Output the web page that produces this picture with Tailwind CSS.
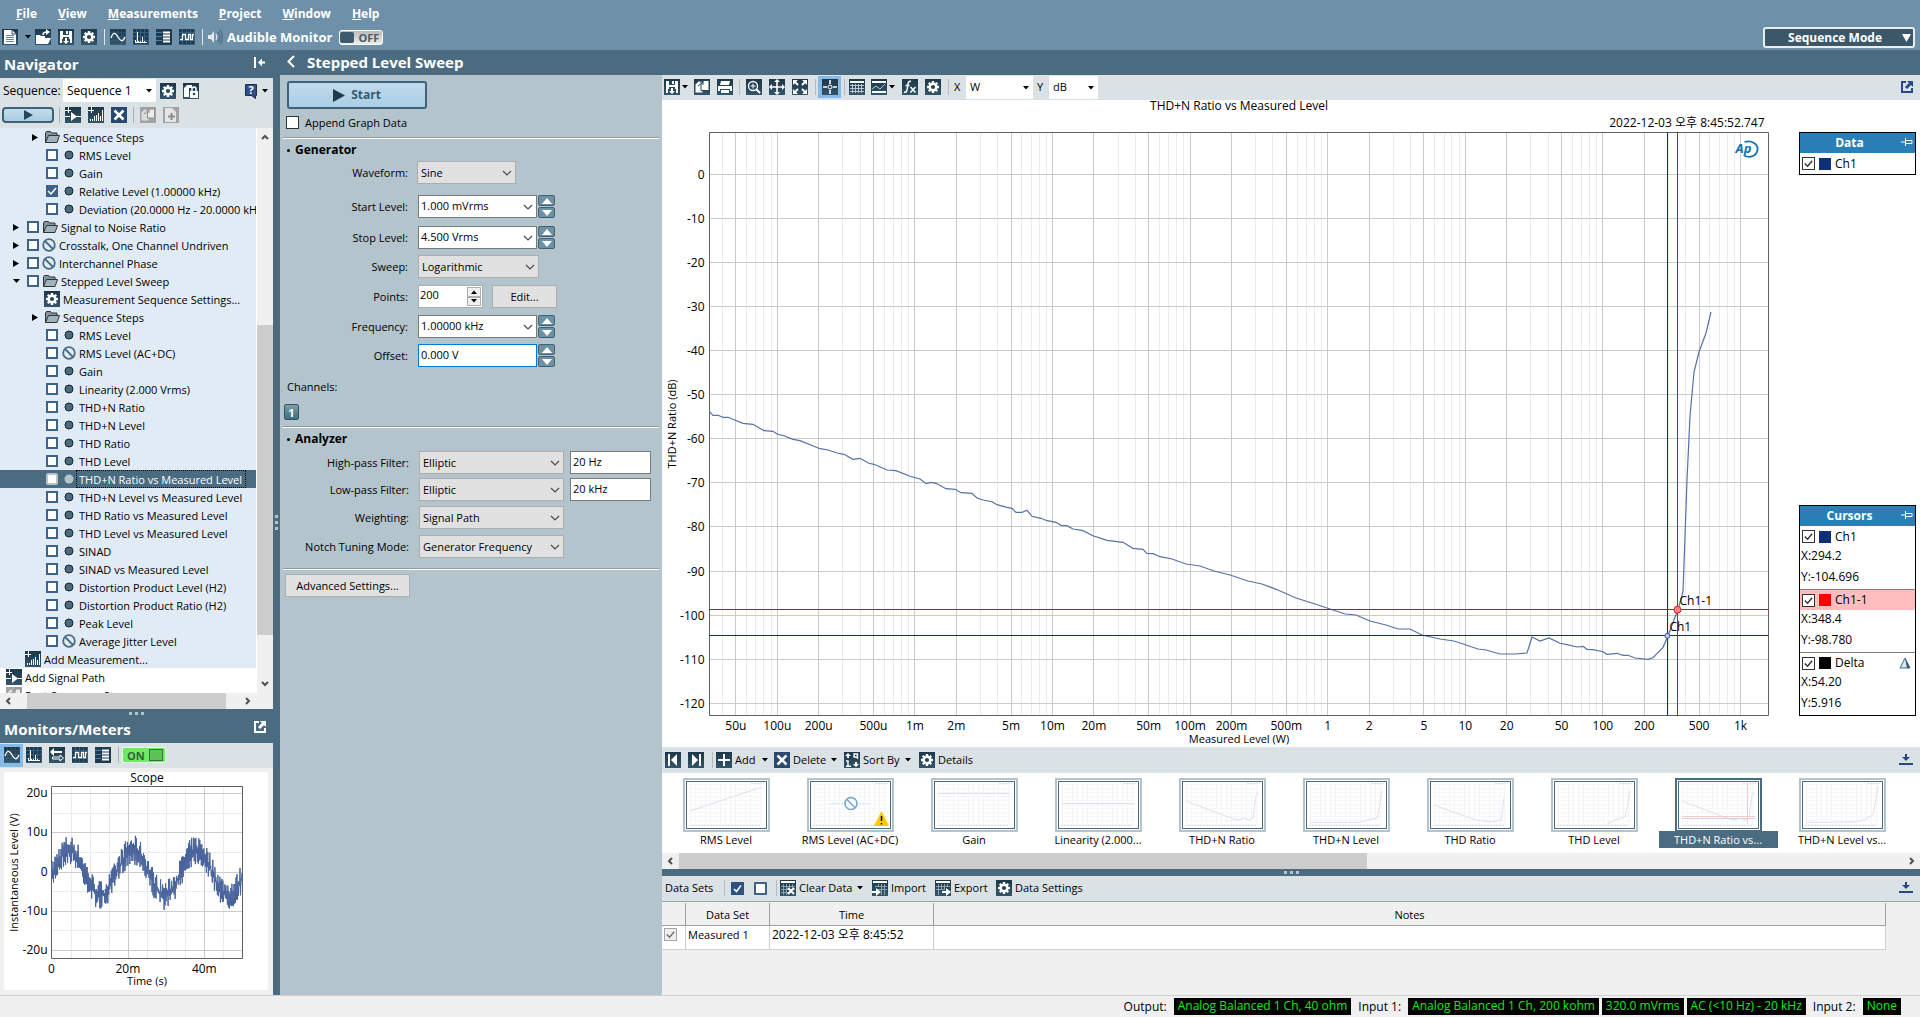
<!DOCTYPE html>
<html lang="en">
<head>
<meta charset="utf-8">
<title>Stepped Level Sweep</title>
<script src="https://cdn.jsdelivr.net/npm/@tailwindcss/browser@4"></script>
</head>
<body class="bg-[#f0f0f0] text-black text-[11px] leading-4 font-['Open_Sans','Noto_Sans_CJK_KR',sans-serif]">
<svg class="absolute size-0" aria-hidden="true">
  <defs>
    <linearGradient id="tile" x1="0" y1="0" x2="0" y2="1"><stop offset="0" stop-color="#1d3748"/><stop offset="1" stop-color="#33556a"/></linearGradient>
    <pattern id="tinygrid" width="4" height="4" patternUnits="userSpaceOnUse"><path d="M0 3.500H4M3.500 0V4" stroke="#3f6c94" stroke-width="1"/></pattern>
  </defs>
  <symbol id="doc" viewBox="0 0 16 16"><rect width="16" height="16" fill="url(#tile)"/><path d="M2 1h8l4 4v10H2z" fill="#fff"/><path d="M10 1v4h4" fill="none" stroke="#2b4a5e"/><path d="M4 6.500h8M4 8.500h8M4 10.500h8M4 12.500h8" stroke="#6b8494"/></symbol>
  <symbol id="open" viewBox="0 0 16 16"><rect width="16" height="16" fill="url(#tile)"/><path d="M1 6h4l1 1h4v3H4l-2 5H1z" fill="#fff"/><path d="M4 9h12l-3 6H1.500z" fill="#fff"/><path d="M8 6c0-3 2-3 4-3" fill="none" stroke="#fff" stroke-width="1.500"/><path d="M11 0l4 3-4 3z" fill="#fff"/></symbol>
  <symbol id="save" viewBox="0 0 16 16"><rect width="16" height="16" fill="url(#tile)"/><path d="M2 2h12v12h-2v-4h-1v-2H5v2H4v4H2z" fill="#fff"/><path d="M5 2h6v4H5z" fill="#26465a"/><path d="M8 2h2v3H8z" fill="#fff"/><path d="M7 9h2v3h2l-3 3-3-3h2z" fill="#fff"/></symbol>
  <symbol id="gear" viewBox="0 0 16 16"><rect width="16" height="16" fill="url(#tile)"/><g fill="#fff"><circle cx="8" cy="8" r="4.500"/><path d="M6.800 2h2.400v12H6.800zM2 6.800h12v2.400H2z"/><path d="M6.800 2h2.400v12H6.800zM2 6.800h12v2.400H2z" transform="rotate(45 8 8)"/></g><circle cx="8" cy="8" r="2.100" fill="#26465a"/></symbol>
  <symbol id="sine" viewBox="0 0 16 16"><rect width="16" height="16" fill="url(#tile)"/><rect width="16" height="16" fill="url(#tinygrid)" opacity=".4"/><path d="M1 9C3 3 5 3 8 8s5 5 7 0" fill="none" stroke="#fff" stroke-width="1.300"/></symbol>
  <symbol id="fft" viewBox="0 0 16 16"><rect width="16" height="16" fill="#1f3b50"/><rect width="16" height="16" fill="url(#tinygrid)" opacity=".7"/><path d="M2.500 13V11M4.500 14V3M5.500 12v2M7.500 14v-2M9.500 14V8M11.500 14v-2M12.500 13v1" stroke="#fff" fill="none"/><path d="M2 13.500h12" stroke="#fff"/></symbol>
  <symbol id="list" viewBox="0 0 16 16"><rect width="16" height="16" fill="#1f3b50"/><path d="M0 3.500h6M0 7.500h6M0 11.500h6" stroke="#4c7cab"/><path d="M7 3.500h7M7 6.500h7M7 9.500h7M7 12.500h7" stroke="#fff" stroke-width="2"/></symbol>
  <symbol id="square" viewBox="0 0 16 16"><rect width="16" height="16" fill="#1f3b50"/><rect width="16" height="16" fill="url(#tinygrid)" opacity=".7"/><path d="M1 10.500h2.500v-5h3v5h3v-5h2v5h2v-5H15" fill="none" stroke="#fff" stroke-width="1.300"/></symbol>
  <symbol id="swap" viewBox="0 0 16 16"><rect width="16" height="16" fill="url(#tile)"/><path d="M1 5l4-4v3h8v2H5v3z" fill="#fff"/><path d="M14.500 11l-3.500-3v2H3.500v2H11v2z" fill="none" stroke="#fff"/></symbol>
  <symbol id="speaker" viewBox="0 0 16 16"><path d="M0 6h3l3-4v12l-3-4H0z" fill="#e4eaee"/><path d="M8 5c1 2 1 4 0 6" fill="none" stroke="#dfe6ea" stroke-width="1.300"/><path d="M10 3c2 3 2 7 0 10M12 1c3 4 3 10 0 14" fill="none" stroke="#4b6c80" stroke-width="1.300"/></symbol>
  <symbol id="lock" viewBox="0 0 16 16"><rect width="16" height="16" fill="url(#tile)"/><path d="M1 5l3-3h5v3H6v9H1z" fill="#fff"/><path d="M7 8h8v7H7z" fill="#fff"/><path d="M9 8V6a2 2 0 014 0v2" fill="none" stroke="#fff" stroke-width="1.500"/><circle cx="11" cy="11" r="1.300" fill="#26465a"/></symbol>
  <symbol id="help" viewBox="0 0 14 16"><path d="M1.500 1.500h11v11h-1v3l-4-3h-6z" fill="#2f4f8f" stroke="#1c2f4a"/></symbol>
  <symbol id="addpath" viewBox="0 0 16 16"><rect width="16" height="16" fill="url(#tile)"/><path d="M3.500 0v6M0 3.500h6M0 9.500h5M11 9.500h5" stroke="#fff"/><path d="M6 5l6 4.500L6 14z" fill="#fff"/></symbol>
  <symbol id="addmeas" viewBox="0 0 16 16"><rect width="16" height="16" fill="url(#tile)"/><path d="M3.500 0v6M0 3.500h6M2.500 14v-2M4.500 14v-2M6.500 14V9M8.500 14V8M10.500 14V6M12.500 14V9M14.500 14V3" stroke="#fff"/></symbol>
  <symbol id="cross" viewBox="0 0 16 16"><rect width="16" height="16" fill="#29486f"/><path d="M3.500 3.500l9 9M12.500 3.500l-9 9" stroke="#fff" stroke-width="2.500"/></symbol>
  <symbol id="copygray" viewBox="0 0 16 16"><rect width="16" height="16" fill="#a3a3a3"/><path d="M1.500 5.500l3-3h4v11h-7z" fill="#dcdcdc"/><path d="M7.500 5l2.500-3h4.500v9h-7z" fill="#ececec" stroke="#8f8f8f"/><path d="M4 7l5-4M9 3v3M9 3H6" stroke="#8f8f8f" fill="none"/></symbol>
  <symbol id="pastegray" viewBox="0 0 16 16"><rect width="16" height="16" fill="#a3a3a3"/><path d="M2 1h7l4 4v10H2z" fill="#e4e4e4"/><path d="M8.500 6v7M5 9.500h7" stroke="#8c8c8c" stroke-width="2"/></symbol>
  <symbol id="copy" viewBox="0 0 16 16"><rect width="16" height="16" fill="url(#tile)"/><path d="M1.500 5.500l3-3h4v11h-7z" fill="#fff"/><path d="M7 5l3-3.500h5v10H7z" fill="#fff" stroke="#26465a"/><path d="M4 7l5-4M9 3v3M9 3H6" stroke="#26465a" fill="none"/></symbol>
  <symbol id="print" viewBox="0 0 16 16"><rect width="16" height="16" fill="url(#tile)"/><path d="M4 2h9l-1 4H3zM1 7h14v5h-2v-2H3v2H1zM4 11h8v3H4z" fill="#fff"/></symbol>
  <symbol id="zoom" viewBox="0 0 16 16"><rect width="16" height="16" fill="url(#tile)"/><circle cx="7" cy="7" r="4.500" fill="none" stroke="#fff" stroke-width="1.300"/><path d="M7 4.500v5M4.500 7h5" stroke="#fff"/><path d="M10 10l4 4" stroke="#fff" stroke-width="2"/></symbol>
  <symbol id="move" viewBox="0 0 16 16"><rect width="16" height="16" fill="url(#tile)"/><path d="M8 2v12M2 8h12" stroke="#fff" stroke-width="1.600"/><path d="M8 0l3 3H5zM8 16l3-3H5zM0 8l3-3v6zM16 8l-3-3v6z" fill="#fff"/></symbol>
  <symbol id="expand" viewBox="0 0 16 16"><rect width="16" height="16" fill="url(#tile)"/><path d="M2 2l4 4M14 2l-4 4M2 14l4-4M14 14l-4-4" stroke="#fff" stroke-width="2"/><path d="M1 1h5L1 6zM15 1h-5l5 5zM1 15h5l-5-5zM15 15h-5l5-5z" fill="#fff"/></symbol>
  <symbol id="cursor" viewBox="0 0 16 16"><rect width="16" height="16" fill="url(#tile)"/><path d="M8 1v4M8 11v4M1 8h4M11 8h4" stroke="#fff" stroke-width="1.600"/><circle cx="8" cy="8" r="2" fill="none" stroke="#fff"/></symbol>
  <symbol id="grid" viewBox="0 0 16 16"><rect width="16" height="16" fill="url(#tile)"/><path d="M1 2h14v2H1z" fill="#fff"/><path d="M1 6.500h14M1 9.500h14M1 12.500h14M3.500 5v9M6.500 5v9M9.500 5v9M12.500 5v9" stroke="#b9c6ce"/></symbol>
  <symbol id="graph" viewBox="0 0 16 16"><rect width="16" height="16" fill="url(#tile)"/><path d="M1 3h14M1 13h14" stroke="#fff" stroke-width="2"/><path d="M1 10l4-3 4 3 5-5" fill="none" stroke="#9fd0e0"/></symbol>
  <symbol id="fx" viewBox="0 0 16 16"><rect width="16" height="16" fill="url(#tile)"/><path d="M9 2.500C6 1.500 6 5 5.500 8S5 14 2 13M3.500 6.500h4" fill="none" stroke="#fff" stroke-width="1.500"/><path d="M8.500 8l5 5.500M13.500 8l-5 5.500" stroke="#fff" stroke-width="1.500"/></symbol>
  <symbol id="first" viewBox="0 0 16 16"><rect width="16" height="16" fill="url(#tile)"/><path d="M3 2h2v12H3z" fill="#fff"/><path d="M12 2v12L6 8z" fill="#fff"/></symbol>
  <symbol id="last" viewBox="0 0 16 16"><rect width="16" height="16" fill="url(#tile)"/><path d="M11 2h2v12h-2z" fill="#fff"/><path d="M4 2v12l6-6z" fill="#fff"/></symbol>
  <symbol id="plus" viewBox="0 0 16 16"><rect width="16" height="16" fill="url(#tile)"/><path d="M8 2v12M2 8h12" stroke="#fff" stroke-width="2"/></symbol>
  <symbol id="sort" viewBox="0 0 16 16"><rect width="16" height="16" fill="url(#tile)"/><path d="M4 1l3 3H5v2H3V4H1zM12 15l-3-3h2v-2h2v2h2z" fill="#fff"/><path d="M2 9h2v5M2 14.300h5M13.500 7V2H10v3h3" fill="none" stroke="#fff" stroke-width="1.400"/></symbol>
  <symbol id="clear" viewBox="0 0 16 16"><rect width="16" height="16" fill="url(#tile)"/><path d="M1 1h14v2H1z" fill="#fff"/><path d="M1 6.500h14M1 9.500h14M1 12.500h8M3.500 4v11M6.500 4v11M9.500 4v6M12.500 4v5" stroke="#8ea1ad"/><path d="M8 8l6 6M14 8l-6 6" stroke="#fff" stroke-width="2"/></symbol>
  <symbol id="import" viewBox="0 0 16 16"><rect width="16" height="16" fill="url(#tile)"/><path d="M1 1h14v2H1z" fill="#fff"/><path d="M3 6.500h12M6 9.500h9M9.500 4v11M12.500 4v11M6.500 4v3" stroke="#8ea1ad"/><path d="M0 11h4V8l5 4-5 4v-3H0z" fill="#fff"/></symbol>
  <symbol id="export" viewBox="0 0 16 16"><rect width="16" height="16" fill="url(#tile)"/><path d="M1 1h14v2H1z" fill="#fff"/><path d="M1 6.500h14M1 9.500h9M3.500 4v11M6.500 4v6M9.500 4v5M12.500 4v3" stroke="#8ea1ad"/><path d="M7 11h4V8l5 4-5 4v-3H7z" fill="#fff"/></symbol>
  <symbol id="external" viewBox="0 0 12 12"><path d="M5 1H1v10h10V7" fill="none" stroke="currentColor" stroke-width="2"/><path d="M6 0h6v6l-2-2-4 4-2-2 4-4z" fill="currentColor"/></symbol>
  <symbol id="dock" viewBox="0 0 14 12"><path d="M6 0h2v3h3L7 7 3 3h3z" fill="currentColor"/><path d="M0 9h14v2H0z" fill="currentColor"/></symbol>
  <symbol id="folder" viewBox="0 0 16 14"><path d="M1.500 12.500V3l1-1.500h4l1 1.500h5.500v3" fill="#7f97a6" stroke="#333"/><path d="M1.500 12.500l3-7h11l-2.500 7z" fill="#9fb3bf" stroke="#333"/></symbol>
  <symbol id="ban" viewBox="0 0 14 14"><circle cx="7" cy="7" r="5.800" fill="none" stroke="#4b6c80" stroke-width="1.800"/><path d="M3 3l8 8" stroke="#4b6c80" stroke-width="1.800"/></symbol>
  <symbol id="dot" viewBox="0 0 14 14"><circle cx="7" cy="7" r="4" fill="#4b6c80" stroke="#16242e"/></symbol>
  <symbol id="dotlight" viewBox="0 0 14 14"><circle cx="7" cy="7" r="4.500" fill="#b4c4cc"/></symbol>
  <symbol id="tri" viewBox="0 0 6 4"><path d="M0 0h6L3 3.500z"/></symbol>
  <symbol id="chev" viewBox="0 0 10 6"><path d="M1 1l4 4 4-4" fill="none" stroke="#4a4a4a" stroke-width="1.200"/></symbol>
  <symbol id="scroll" viewBox="0 0 8 6"><path d="M1 5l3-3 3 3" fill="none" stroke="#505050" stroke-width="2"/></symbol>
  <symbol id="pin" viewBox="0 0 12 8"><path d="M0 4h4M4.500 0v8M5 2.500h6v3H5" fill="none" stroke="#fff"/></symbol>
</svg>

<div class="h-screen flex flex-col">
  <header class="h-[50px] shrink-0 bg-[#6e91a9] text-white font-bold flex items-start justify-between">
    <div>
      <nav class="h-[26px] flex items-center gap-[21px] pl-4 pt-px text-xs">
        <a href="#"><u>F</u>ile</a><a href="#"><u>V</u>iew</a><a href="#"><u>M</u>easurements</a><a href="#"><u>P</u>roject</a><a href="#"><u>W</u>indow</a><a href="#"><u>H</u>elp</a>
      </nav>
      <div class="h-[22px] flex items-center gap-[7px] pl-0.5">
        <button aria-label="New"><svg class="block size-4"><use href="#doc"/></svg></button>
        <svg class="w-[6px] h-1 -mr-[3px] fill-black"><use href="#tri"/></svg>
        <button aria-label="Open"><svg class="block size-4"><use href="#open"/></svg></button>
        <button aria-label="Save"><svg class="block size-4"><use href="#save"/></svg></button>
        <button aria-label="Settings"><svg class="block size-4"><use href="#gear"/></svg></button>
        <i class="w-px h-4 bg-white/80 -mr-0.5"></i>
        <button aria-label="Scope"><svg class="block size-4"><use href="#sine"/></svg></button>
        <button aria-label="FFT"><svg class="block size-4"><use href="#fft"/></svg></button>
        <button aria-label="Meters"><svg class="block size-4"><use href="#list"/></svg></button>
        <button aria-label="Digital"><svg class="block size-4"><use href="#square"/></svg></button>
        <i class="w-px h-4 bg-white/80"></i>
        <svg class="size-4 -ml-0.5"><use href="#speaker"/></svg>
        <span class="text-[13px] -ml-1">Audible Monitor</span>
        <button class="w-11 h-[15px] rounded-[3px] border border-white bg-linear-to-b from-[#b9b9b9] to-[#ededed] flex items-center text-[11px] leading-none text-[#4b5a64]"><i class="w-[14px] h-[11px] bg-[#3f5a6b] rounded-[2px] mr-1"></i>OFF</button>
      </div>
    </div>
    <button class="mt-[27px] mr-[5px] w-[152px] h-[21px] rounded-[3px] border-2 border-[#e8edf0] bg-[#3b5768] text-xs font-bold flex items-center justify-end pr-0.5 gap-5">Sequence Mode<svg class="w-[9px] h-2" viewBox="0 0 9 8"><path d="M0 0h9L4.500 8z" fill="#fff"/></svg></button>
  </header>

  <div class="flex-1 min-h-0 flex">
    <aside class="w-[273px] shrink-0 flex flex-col bg-[#f0f0f0]">
      <div class="h-7 bg-[#4b6c80] text-white flex items-center justify-between pl-1 pr-2">
        <h2 class="text-[15px] leading-5 font-bold">Navigator</h2>
        <svg class="w-[11px] h-[11px] mb-1" viewBox="0 0 11 11"><path d="M0 0h2v11H0zM4 5.500l4-4v3h3v2H8v3z" fill="#fff"/></svg>
      </div>
      <div class="h-[50px] bg-[#dbe2e5]">
        <div class="h-[25px] flex items-center pl-[3px] pr-[5px]">
          <label for="seq" class="w-[60px] text-xs">Sequence:</label>
          <div class="relative w-[93px] h-[23px]"><select id="seq" class="appearance-none w-full h-full bg-white pl-1 text-xs"><option>Sequence 1</option></select><svg class="absolute right-1 top-[10px] w-[6px] h-1"><use href="#tri"/></svg></div>
          <button class="ml-1" aria-label="Sequence settings"><svg class="block size-4"><use href="#gear"/></svg></button>
          <button class="ml-[7px]" aria-label="Lock"><svg class="block size-4"><use href="#lock"/></svg></button>
          <button class="ml-auto relative" aria-label="Help"><svg class="block w-[14px] h-4"><use href="#help"/></svg><b class="absolute inset-0 text-center text-white text-[11px] leading-[14px]">?</b></button>
          <svg class="ml-1 w-[6px] h-1"><use href="#tri"/></svg>
        </div>
        <div class="h-[25px] flex items-center pl-0.5 pb-0.5">
          <button aria-label="Run" class="w-[52px] h-4 rounded-[4px] border-2 border-[#3f6277] bg-linear-to-b from-[#c3dceb] to-[#a9cde4] flex items-center justify-center"><svg class="w-[9px] h-[10px]" viewBox="0 0 9 10"><path d="M0 0l9 5-9 5z" fill="#26465a"/></svg></button>
          <i class="mx-[5px] w-px h-4 bg-[#a8b0b4]"></i>
          <button aria-label="Add signal path"><svg class="block size-4"><use href="#addpath"/></svg></button>
          <button class="ml-[7px]" aria-label="Add measurement"><svg class="block size-4"><use href="#addmeas"/></svg></button>
          <button class="ml-[7px]" aria-label="Delete"><svg class="block size-4"><use href="#cross"/></svg></button>
          <i class="mx-[6px] w-px h-4 bg-[#a8b0b4]"></i>
          <button aria-label="Copy"><svg class="block size-4"><use href="#copygray"/></svg></button>
          <button class="ml-[7px]" aria-label="Paste"><svg class="block size-4"><use href="#pastegray"/></svg></button>
        </div>
      </div>
      <div class="flex-1 min-h-0 flex">
        <ul id="tree" class="flex-1 overflow-hidden bg-white"></ul>
        <div class="w-[17px] border-l border-white flex flex-col items-center">
          <svg class="w-2 h-[6px] mt-[6px] mb-[5px]"><use href="#scroll"/></svg>
          <i class="grow-[18]"></i><i class="w-full grow-[31] bg-[#cdcdcd]"></i><i class="grow-[4]"></i>
          <svg class="w-2 h-[6px] my-[6px] rotate-180"><use href="#scroll"/></svg>
        </div>
      </div>
      <div class="h-4 flex items-center pl-1 pr-[21px]">
        <svg class="w-2 h-[6px] -rotate-90"><use href="#scroll"/></svg><i class="ml-[15px] w-[199px] h-full bg-[#cdcdcd]"></i><svg class="ml-auto w-2 h-[6px] rotate-90"><use href="#scroll"/></svg>
      </div>
      <div class="h-[34px] bg-[#4b6c80] text-white flex flex-col">
        <div class="h-2 flex justify-center items-center gap-[3px]"><i class="size-[3px] bg-[#b4c4cc]"></i><i class="size-[3px] bg-[#b4c4cc]"></i><i class="size-[3px] bg-[#b4c4cc]"></i></div>
        <div class="flex items-center justify-between pl-1 pr-[7px]"><h2 class="text-[15px] leading-6 font-bold">Monitors/Meters</h2><svg class="size-3 mb-1"><use href="#external"/></svg></div>
      </div>
      <div class="h-[25px] bg-[#dbe2e5] flex items-center gap-[7px] pb-px pr-3">
        <button class="w-[23px] h-[23px] bg-[#85bbe8] flex items-center justify-center -mr-1" aria-label="Scope"><svg class="size-4"><use href="#sine"/></svg></button>
        <button aria-label="FFT"><svg class="block size-4"><use href="#fft"/></svg></button>
        <button aria-label="Levels"><svg class="block size-4"><use href="#swap"/></svg></button>
        <button aria-label="Digital"><svg class="block size-4"><use href="#square"/></svg></button>
        <button aria-label="Meters"><svg class="block size-4"><use href="#list"/></svg></button>
        <i class="w-px h-4 bg-[#a8b0b4]"></i>
        <button class="-ml-1 w-11 h-4 rounded-[2px] border border-[#e6ffe6] bg-[#6fea62] text-[11px] leading-none font-bold text-[#2f6440] flex items-center justify-between pl-1 pr-0.5">ON<i class="w-[14px] h-3 border border-[#2f7a34] bg-[#5cc457]"></i></button>
      </div>
      <div class="h-[227px] pt-1 pl-1 pr-[5px] pb-[5px]"><div class="h-full bg-white"><svg id="scope" class="block w-full h-full text-xs"></svg></div></div>
    </aside>

    <div class="w-[7px] shrink-0 bg-[#4b6c80] flex flex-col items-center justify-center gap-[3px]"><i class="size-[3px] bg-[#b4c4cc]"></i><i class="size-[3px] bg-[#b4c4cc]"></i><i class="size-[3px] bg-[#b4c4cc]"></i></div>

    <main class="flex-1 min-w-0 flex flex-col">
      <div class="h-[25px] shrink-0 bg-[#4b6c80] text-white flex items-center pl-[7px] pb-0.5 gap-3">
        <svg class="w-2 h-[13px]" viewBox="0 0 8 13"><path d="M7 1L1.500 6.500 7 12" fill="none" stroke="#fff" stroke-width="2"/></svg>
        <h2 class="text-[15px] leading-5 font-bold">Stepped Level Sweep</h2>
      </div>
      <div class="flex-1 min-h-0 flex">
        <section class="w-[382px] shrink-0 bg-[#b4c4cc] px-[3px]">
          <button class="mt-1.5 ml-1 w-[140px] h-7 rounded-[3px] border-2 border-[#3f6277] bg-linear-to-b from-[#c0dbea] to-[#a9cee6] flex items-center justify-center gap-1.5 text-xs font-bold text-[#355b6e]"><svg class="w-3 h-[13px]" viewBox="0 0 12 13"><path d="M0 0l12 6.500L0 13z" fill="#1f3a4a"/></svg>Start</button>
          <label class="mt-[7px] ml-[3px] h-[13px] flex items-center gap-1.5"><input type="checkbox" class="appearance-none size-[13px] bg-white border border-[#333]">Append Graph Data</label>
          <hr class="mt-2 h-0.5 border-0 border-t border-t-[#8f9ba2] bg-white">
          <h3 class="mt-[3px] ml-1 text-xs font-bold flex items-center gap-[5px]"><i class="size-[3px] rounded-full bg-black"></i>Generator</h3>
          <div class="mt-[3px]">
            <div class="flex items-center"><label for="wf" class="w-[125px] text-right">Waveform:</label><div class="relative ml-[9px] w-[99px] h-[23px]"><select id="wf" class="appearance-none w-full h-full border border-[#adadad] bg-[#e1e1e1] pl-[3px]"><option>Sine</option></select><svg class="absolute right-1 top-[9px] w-[10px] h-[6px]"><use href="#chev"/></svg></div></div>
            <div class="mt-[11px] flex items-center"><label for="sl" class="w-[125px] text-right">Start Level:</label><div class="relative ml-[10px] w-[119px] h-[23px]"><input id="sl" value="1.000 mVrms" class="w-full h-full border border-[#7a7a7a] bg-white pl-0.5 pb-0.5"><svg class="absolute right-1 top-[9px] w-[10px] h-[6px]"><use href="#chev"/></svg></div><span data-spin class="ml-px"></span></div>
            <div class="mt-2 flex items-center"><label for="tl" class="w-[125px] text-right">Stop Level:</label><div class="relative ml-[10px] w-[119px] h-[23px]"><input id="tl" value="4.500 Vrms" class="w-full h-full border border-[#7a7a7a] bg-white pl-0.5 pb-0.5"><svg class="absolute right-1 top-[9px] w-[10px] h-[6px]"><use href="#chev"/></svg></div><span data-spin class="ml-px"></span></div>
            <div class="mt-1.5 flex items-center"><label for="sw" class="w-[125px] text-right">Sweep:</label><div class="relative ml-[10px] w-[121px] h-[23px]"><select id="sw" class="appearance-none w-full h-full border border-[#adadad] bg-[#e1e1e1] pl-[3px]"><option>Logarithmic</option></select><svg class="absolute right-1 top-[9px] w-[10px] h-[6px]"><use href="#chev"/></svg></div></div>
            <div class="mt-[7px] flex items-center"><label for="pt" class="w-[125px] text-right">Points:</label><div class="ml-[10px] w-[65px] h-[23px] border border-[#adadad] bg-white flex"><input id="pt" value="200" class="w-[48px] pl-px pb-1"><div class="flex flex-col w-[14px] my-px"><button aria-label="More points" class="flex-1 border border-[#adadad] bg-[#f0f0f0] flex items-center justify-center"><svg class="w-[6px] h-1 rotate-180"><use href="#tri"/></svg></button><button aria-label="Fewer points" class="flex-1 border border-[#adadad] bg-[#f0f0f0] flex items-center justify-center"><svg class="w-[6px] h-1"><use href="#tri"/></svg></button></div></div><button class="ml-[9px] w-[65px] h-[23px] border border-[#adadad] bg-[#e1e1e1]">Edit...</button></div>
            <div class="mt-[7px] flex items-center"><label for="fr" class="w-[125px] text-right">Frequency:</label><div class="relative ml-[10px] w-[119px] h-[23px]"><input id="fr" value="1.00000 kHz" class="w-full h-full border border-[#7a7a7a] bg-white pl-0.5 pb-0.5"><svg class="absolute right-1 top-[9px] w-[10px] h-[6px]"><use href="#chev"/></svg></div><span data-spin class="ml-px"></span></div>
            <div class="mt-1.5 flex items-center"><label for="of" class="w-[125px] text-right">Offset:</label><input id="of" value="0.000 V" class="ml-[10px] w-[119px] h-[23px] border border-[#0078d7] bg-white pl-0.5 pb-0.5"><span data-spin class="ml-px"></span></div>
          </div>
          <p class="mt-3 ml-1">Channels:</p>
          <button class="mt-[9px] ml-px w-[15px] h-4 rounded-[2px] border border-[#2f5565] bg-linear-to-b from-[#7d9da5] to-[#3d6f7c] text-white font-bold leading-none flex items-center justify-center">1</button>
          <hr class="mt-1.5 h-0.5 border-0 border-t border-t-[#8f9ba2] bg-white">
          <h3 class="mt-[3px] ml-1 text-xs font-bold flex items-center gap-[5px]"><i class="size-[3px] rounded-full bg-black"></i>Analyzer</h3>
          <div class="mt-1">
            <div class="flex items-center"><label for="hp" class="w-[126px] text-right">High-pass Filter:</label><div class="relative ml-[10px] w-[145px] h-[23px]"><select id="hp" class="appearance-none w-full h-full border border-[#adadad] bg-[#e1e1e1] pl-[3px]"><option>Elliptic</option></select><svg class="absolute right-1 top-[9px] w-[10px] h-[6px]"><use href="#chev"/></svg></div><input aria-label="High-pass frequency" value="20 Hz" class="ml-1.5 w-[81px] h-[23px] border border-[#7a7a7a] bg-white pl-0.5 pb-0.5"></div>
            <div class="mt-1 flex items-center"><label for="lp" class="w-[126px] text-right">Low-pass Filter:</label><div class="relative ml-[10px] w-[145px] h-[23px]"><select id="lp" class="appearance-none w-full h-full border border-[#adadad] bg-[#e1e1e1] pl-[3px]"><option>Elliptic</option></select><svg class="absolute right-1 top-[9px] w-[10px] h-[6px]"><use href="#chev"/></svg></div><input aria-label="Low-pass frequency" value="20 kHz" class="ml-1.5 w-[81px] h-[23px] border border-[#7a7a7a] bg-white pl-0.5 pb-0.5"></div>
            <div class="mt-[5px] flex items-center"><label for="wt" class="w-[126px] text-right">Weighting:</label><div class="relative ml-[10px] w-[145px] h-[23px]"><select id="wt" class="appearance-none w-full h-full border border-[#adadad] bg-[#e1e1e1] pl-[3px]"><option>Signal Path</option></select><svg class="absolute right-1 top-[9px] w-[10px] h-[6px]"><use href="#chev"/></svg></div></div>
            <div class="mt-1.5 flex items-center"><label for="nt" class="w-[126px] text-right">Notch Tuning Mode:</label><div class="relative ml-[10px] w-[145px] h-[23px]"><select id="nt" class="appearance-none w-full h-full border border-[#adadad] bg-[#e1e1e1] pl-[3px]"><option>Generator Frequency</option></select><svg class="absolute right-1 top-[9px] w-[10px] h-[6px]"><use href="#chev"/></svg></div></div>
          </div>
          <hr class="mt-[10px] h-0.5 border-0 border-t border-t-[#8f9ba2] bg-white">
          <button class="mt-1 ml-0.5 w-[125px] h-[23px] border border-[#adadad] bg-[#e1e1e1]">Advanced Settings...</button>
        </section>

        <section class="flex-1 min-w-0 flex flex-col">
          <div class="h-[25px] shrink-0 bg-[#dbe2e5] flex items-center pb-px pl-0.5 pr-[7px]">
            <button aria-label="Save graph"><svg class="block size-4"><use href="#save"/></svg></button>
            <svg class="ml-0.5 w-[6px] h-1"><use href="#tri"/></svg>
            <button class="ml-1.5" aria-label="Copy"><svg class="block size-4"><use href="#copy"/></svg></button>
            <button class="ml-[7px]" aria-label="Print"><svg class="block size-4"><use href="#print"/></svg></button>
            <i class="mx-[6px] w-px h-4 bg-[#b3bbbf]"></i>
            <button aria-label="Zoom"><svg class="block size-4"><use href="#zoom"/></svg></button>
            <button class="ml-[7px]" aria-label="Pan"><svg class="block size-4"><use href="#move"/></svg></button>
            <button class="ml-[7px]" aria-label="Fit"><svg class="block size-4"><use href="#expand"/></svg></button>
            <i class="ml-[7px] mr-0.5 w-px h-4 bg-[#b3bbbf]"></i>
            <button class="w-[23px] h-[22px] bg-[#85bbe8] flex items-center justify-center" aria-label="Cursors"><svg class="size-4"><use href="#cursor"/></svg></button>
            <i class="ml-[3px] mr-1 w-px h-4 bg-[#b3bbbf]"></i>
            <button aria-label="Table"><svg class="block size-4"><use href="#grid"/></svg></button>
            <button class="ml-1.5" aria-label="Graph type"><svg class="block size-4"><use href="#graph"/></svg></button>
            <svg class="ml-0.5 w-[6px] h-1"><use href="#tri"/></svg>
            <button class="ml-[7px]" aria-label="Functions"><svg class="block size-4"><use href="#fx"/></svg></button>
            <button class="ml-[7px]" aria-label="Graph settings"><svg class="block size-4"><use href="#gear"/></svg></button>
            <i class="ml-[7px] mr-[5px] w-px h-4 bg-[#b3bbbf]"></i>
            <label for="ux" class="w-3">X</label>
            <div class="relative w-[67px] h-[23px]"><select id="ux" class="appearance-none w-full h-full bg-white pl-1"><option>W</option></select><svg class="absolute right-1 top-[10px] w-[6px] h-1"><use href="#tri"/></svg></div>
            <label for="uy" class="ml-1 w-3">Y</label>
            <div class="relative w-[49px] h-[23px]"><select id="uy" class="appearance-none w-full h-full bg-white pl-1"><option>dB</option></select><svg class="absolute right-1 top-[10px] w-[6px] h-1"><use href="#tri"/></svg></div>
            <button class="ml-auto text-[#24488a]" aria-label="Undock"><svg class="block size-3"><use href="#external"/></svg></button>
          </div>
          <div class="flex-1 min-h-0 bg-white flex">
            <svg id="chart" class="flex-1 min-w-0 h-full text-xs"></svg>
            <div class="w-[121px] shrink-0 pr-1 pt-8 pb-[31px] flex flex-col justify-between text-xs">
              <div class="border border-black">
                <h4 class="h-5 bg-[#2a80b6] text-white font-bold flex items-center justify-center pr-4 relative">Data<svg class="absolute right-0.5 top-[5px] w-3 h-2"><use href="#pin"/></svg></h4>
                <label class="h-[21px] flex items-center pl-0.5"><input type="checkbox" checked class="tick appearance-none size-[13px] border border-[#333] bg-white"><i class="mx-1 size-3 bg-[#0f2f7a]"></i>Ch1</label>
              </div>
              <div class="border border-black">
                <h4 class="h-5 bg-[#2a80b6] text-white font-bold flex items-center justify-center pr-4 relative">Cursors<svg class="absolute right-0.5 top-[5px] w-3 h-2"><use href="#pin"/></svg></h4>
                <label class="h-[21px] flex items-center pl-0.5"><input type="checkbox" checked class="tick appearance-none size-[13px] border border-[#333] bg-white"><i class="mx-1 size-3 bg-[#0f2f7a]"></i>Ch1</label>
                <p class="h-[21px] pl-px pt-px">X:294.2</p><p class="h-[21px] pl-px pt-px">Y:-104.696</p>
                <label class="h-[21px] border-t border-[#808080] bg-[#ffbdbd] flex items-center pl-0.5"><input type="checkbox" checked class="tick appearance-none size-[13px] border border-[#333] bg-white"><i class="mx-1 size-3 bg-[#f00]"></i>Ch1-1</label>
                <p class="h-[21px] pl-px pt-px">X:348.4</p><p class="h-[21px] pl-px pt-px">Y:-98.780</p>
                <label class="h-[21px] border-t border-[#808080] flex items-center pl-0.5 pr-1"><input type="checkbox" checked class="tick appearance-none size-[13px] border border-[#333] bg-white"><i class="mx-1 size-3 bg-black"></i>Delta<svg class="ml-auto w-3 h-3" viewBox="0 0 12 12"><path d="M6 1L1 11h10z" fill="#d5e6f0" stroke="#3f6a8c"/><path d="M6 1l5 10H8z" fill="#2f5a7c"/></svg></label>
                <p class="h-[21px] pl-px pt-px">X:54.20</p><p class="h-[21px] pl-px pt-px">Y:5.916</p>
              </div>
            </div>
          </div>

          <div class="h-[26px] shrink-0 bg-[#dbe2e5] flex items-center pl-[3px] pr-[7px]">
            <button aria-label="First"><svg class="block size-4"><use href="#first"/></svg></button>
            <button class="ml-[7px]" aria-label="Last"><svg class="block size-4"><use href="#last"/></svg></button>
            <i class="ml-2 mr-[3px] w-px h-4 bg-[#b3bbbf]"></i>
            <button class="w-[50px] flex items-center gap-[3px] whitespace-nowrap"><svg class="size-4 shrink-0"><use href="#plus"/></svg>Add<svg class="ml-1 w-[6px] h-1 shrink-0"><use href="#tri"/></svg></button>
            <button class="ml-2 w-[62px] flex items-center gap-[3px] whitespace-nowrap"><svg class="size-4 shrink-0"><use href="#cross"/></svg>Delete<svg class="ml-0.5 w-[6px] h-1 shrink-0"><use href="#tri"/></svg></button>
            <button class="ml-2 w-[67px] flex items-center gap-[3px] whitespace-nowrap"><svg class="size-4 shrink-0"><use href="#sort"/></svg>Sort By<svg class="ml-0.5 w-[6px] h-1 shrink-0"><use href="#tri"/></svg></button>
            <button class="ml-2 flex items-center gap-[3px] whitespace-nowrap"><svg class="size-4 shrink-0"><use href="#gear"/></svg>Details</button>
            <button class="ml-auto text-[#24488a]" aria-label="Collapse"><svg class="block w-[14px] h-3"><use href="#dock"/></svg></button>
          </div>
          <div id="thumbs" class="h-20 shrink-0 bg-white flex overflow-hidden pl-0.5 pt-[5px]"></div>
          <div class="h-4 shrink-0 flex items-center pl-1 pr-1">
            <svg class="w-2 h-[6px] -rotate-90"><use href="#scroll"/></svg><i class="ml-[5px] w-[55%] h-full bg-[#cdcdcd]"></i><svg class="ml-auto w-2 h-[6px] rotate-90"><use href="#scroll"/></svg>
          </div>
          <div class="h-[7px] shrink-0 bg-[#4b6c80] flex justify-center items-center gap-[3px]"><i class="size-[3px] bg-[#b4c4cc]"></i><i class="size-[3px] bg-[#b4c4cc]"></i><i class="size-[3px] bg-[#b4c4cc]"></i></div>
          <div class="h-[26px] shrink-0 bg-[#dbe2e5] border-b border-[#a0a0a0] flex items-center pb-px pl-[3px] pr-[7px]">
            <span class="w-[59px]">Data Sets</span>
            <i class="w-px h-4 bg-[#b3bbbf]"></i>
            <button class="ml-1.5" aria-label="Select all"><svg class="block size-[13px]" viewBox="0 0 13 13"><rect width="13" height="13" fill="#2f5180"/><path d="M3 7l2.500 2.500L10 3.500" fill="none" stroke="#fff" stroke-width="1.500"/></svg></button>
            <button class="ml-[10px] mr-[9px] size-[13px] bg-white border-2 border-[#3f6288] rounded-[1px]" aria-label="Select none"></button>
            <i class="mr-[3px] w-px h-4 bg-[#b3bbbf]"></i>
            <button class="w-[86px] flex items-center gap-[3px] whitespace-nowrap"><svg class="size-4 shrink-0"><use href="#clear"/></svg>Clear Data<svg class="ml-0.5 w-[6px] h-1 shrink-0"><use href="#tri"/></svg></button>
            <button class="ml-1.5 w-[56px] flex items-center gap-[3px] whitespace-nowrap"><svg class="size-4 shrink-0"><use href="#import"/></svg>Import</button>
            <button class="ml-[7px] w-[54px] flex items-center gap-[3px] whitespace-nowrap"><svg class="size-4 shrink-0"><use href="#export"/></svg>Export</button>
            <button class="ml-[7px] flex items-center gap-[3px] whitespace-nowrap"><svg class="size-4 shrink-0"><use href="#gear"/></svg>Data Settings</button>
            <button class="ml-auto text-[#24488a]" aria-label="Collapse"><svg class="block w-[14px] h-3"><use href="#dock"/></svg></button>
          </div>
          <div class="h-[93px] shrink-0 pt-px pr-[34px] bg-[#f0f0f0]">
            <table class="w-full table-fixed border-separate border-spacing-0">
              <thead><tr class="h-[23px]"><th class="w-6 border-r border-b border-[#a0a0a0]"></th><th class="w-[84px] pt-0.5 font-normal border-r border-b border-[#a0a0a0]">Data Set</th><th class="w-[164px] pt-0.5 font-normal border-r border-b border-[#a0a0a0]">Time</th><th class="pt-0.5 font-normal border-r border-b border-[#a0a0a0]">Notes</th></tr></thead>
              <tbody><tr class="h-6 bg-white align-top"><td class="border-r border-b border-[#d0d0d0] pt-0.5 pl-0.5"><input type="checkbox" checked aria-label="Measured 1" class="tick appearance-none block size-[13px] border border-[#808080] bg-[#e8e8e8] opacity-70"></td><td class="border-r border-b border-[#d0d0d0] pl-0.5 pt-px">Measured 1</td><td class="border-r border-b border-[#d0d0d0] pl-0.5 pt-px text-xs leading-4">2022-12-03 오후 8:45:52</td><td class="border-r border-b border-[#d0d0d0]"></td></tr></tbody>
            </table>
          </div>
        </section>
      </div>
    </main>
  </div>

  <footer class="h-[22px] shrink-0 border-t border-[#d0d0d0] flex items-center justify-end pr-[19px] text-xs">
    <span class="mr-[7px]">Output:</span><span class="h-[17px] px-1 bg-black text-[#00f010]">Analog Balanced 1 Ch, 40 ohm</span>
    <span class="mx-[7px]">Input 1:</span><span class="h-[17px] px-1 bg-black text-[#00f010]">Analog Balanced 1 Ch, 200 kohm</span><span class="ml-[3px] h-[17px] px-1 bg-black text-[#00f010]">320.0 mVrms</span><span class="ml-[3px] h-[17px] px-1 bg-black text-[#00f010]">AC (&lt;10 Hz) - 20 kHz</span>
    <span class="mx-[7px]">Input 2:</span><span class="h-[17px] px-1 bg-black text-[#00f010]">None</span>
  </footer>
</div>

<script>
// Navigator tree: [indent, arrow, has checkbox, icon, label, state]
const rows = [
  [32,'r',0,'folder','Sequence Steps'],
  [46,'',1,'dot','RMS Level'],[46,'',1,'dot','Gain'],[46,'',1,'dot','Relative Level (1.00000 kHz)','on'],[46,'',1,'dot','Deviation (20.0000 Hz - 20.0000 kHz)'],
  [13,'r',1,'folder','Signal to Noise Ratio'],[13,'r',1,'ban','Crosstalk, One Channel Undriven'],[13,'r',1,'ban','Interchannel Phase'],[13,'d',1,'folder','Stepped Level Sweep'],
  [44,'',0,'gear','Measurement Sequence Settings...'],[32,'r',0,'folder','Sequence Steps'],
  [46,'',1,'dot','RMS Level'],[46,'',1,'ban','RMS Level (AC+DC)'],[46,'',1,'dot','Gain'],[46,'',1,'dot','Linearity (2.000 Vrms)'],[46,'',1,'dot','THD+N Ratio'],[46,'',1,'dot','THD+N Level'],[46,'',1,'dot','THD Ratio'],[46,'',1,'dot','THD Level'],
  [46,'',1,'dotlight','THD+N Ratio vs Measured Level','sel'],[46,'',1,'dot','THD+N Level vs Measured Level'],[46,'',1,'dot','THD Ratio vs Measured Level'],[46,'',1,'dot','THD Level vs Measured Level'],[46,'',1,'dot','SINAD'],[46,'',1,'dot','SINAD vs Measured Level'],[46,'',1,'dot','Distortion Product Level (H2)'],[46,'',1,'dot','Distortion Product Ratio (H2)'],[46,'',1,'dot','Peak Level'],[46,'',1,'ban','Average Jitter Level'],
  [25,'',0,'addmeas','Add Measurement...'],[6,'',0,'addpath','Add Signal Path','white'],[6,'',0,'copygray','Post-Sequence Steps','white']
];
document.getElementById('tree').innerHTML = rows.map(([x,arrow,box,icon,label,st]) => {
  const bg = st==='sel' ? 'bg-[#4b6c80] text-white' : st==='white' ? 'bg-white' : 'bg-[#e0ebf5]';
  const tri = arrow==='r' ? '<svg class="w-[6px] h-[7px] mr-px" viewBox="0 0 6 7"><path d="M0 0l6 3.500-6 3.500z"/></svg>' : arrow==='d' ? '<svg class="w-[7px] h-2" viewBox="0 0 7 8"><path d="M0 2h7L3.500 6z"/></svg>' : '';
  const cb = box ? `<input type="checkbox" aria-label="${label}" ${st==='on'?'checked class="treetick appearance-none size-3 shrink-0 bg-[#3f6288]"':st==='sel'?'class="appearance-none size-3 shrink-0 border-2 border-[#b4c4cc] rounded-[2px] bg-white"':'class="appearance-none size-3 shrink-0 border-2 border-[#3f6288] bg-white"'}>` : '';
  const space = arrow && box ? 'ml-[7px]' : arrow ? 'ml-[5px]' : '';
  const ic = icon==='folder' ? 'w-4 h-[14px]' : icon==='gear'||icon.startsWith('add')||icon==='copygray' ? 'size-4' : 'size-[14px]';
  return `<li class="h-[18px] flex items-center whitespace-nowrap ${bg}" style="padding-left:${x}px">${tri}<span class="${space} flex items-center ${arrow?'gap-[3px]':'gap-1'}">${cb}<svg class="${ic} shrink-0"><use href="#${icon}"/></svg></span><span class="${st==='sel'?'outline-1 outline-dotted outline-black -outline-offset-1 pr-1 ':''}pl-[3px] h-[18px] pt-px leading-[18px]">${label}</span></li>`;
}).join('');

document.querySelectorAll('[data-spin]').forEach(s => s.innerHTML = '<span class="flex flex-col gap-px w-[17px]"><button aria-label="Increase" class="h-[11px] rounded-[2px] border border-[#3f6277] bg-[#6e91a3] flex items-center justify-center"><svg class="w-[10px] h-[6px]" viewBox="0 0 10 6"><path d="M0 6h10L5 0z" fill="#fff"/></svg></button><button aria-label="Decrease" class="h-[11px] rounded-[2px] border border-[#3f6277] bg-[#6e91a3] flex items-center justify-center"><svg class="w-[10px] h-[6px]" viewBox="0 0 10 6"><path d="M0 0h10L5 6z" fill="#fff"/></svg></button></span>');

document.querySelectorAll('.tick,.treetick').forEach(b => {
  const color = b.classList.contains('treetick') ? 'white' : '%23333';
  b.style.backgroundImage = `url("data:image/svg+xml,<svg xmlns='http://www.w3.org/2000/svg' viewBox='0 0 12 12'><path d='M2 6l3 3 5-6' fill='none' stroke='${color}' stroke-width='1.500'/></svg>")`;
});

// Thumbnails: curve given in a 79 x 46 box
const sweep = 'M3 19L24 27 45 35 55 38 62 36 66 38 70 36 73 14 75 10';
const thumbs = [
  ['RMS Level','M3 29L75 5'],['RMS Level (AC+DC)',''],['Gain','M3 11.500H75'],['Linearity (2.000...','M3 21.500H75'],
  ['THD+N Ratio',sweep],['THD+N Level','M3 40.500H52L60 38 70 36 73 22 75 8'],['THD Ratio','M3 23L45 38 60 40 70 38 73 16'],['THD Level','M52 42L60 38 70 35 73 22 75 8'],
  ['THD+N Ratio vs...',sweep,'sel'],['THD+N Level vs...','M3 40.500L52 40 60 38 70 33 73 16 75 4']
];
document.getElementById('thumbs').innerHTML = thumbs.map(([t,d,sel]) => {
  let g = ''; for (let x=3;x<77;x+=5) g += `M${x}.5 2V42`; for (let y=2;y<43;y+=4) g += `M3 ${y}.5H76`;
  const extra = t.includes('AC+DC') ? '<path d="M18 21.500h42" stroke="#cfe2ee" stroke-dasharray="2 1"/><circle cx="40" cy="21.500" r="6" fill="#fff" stroke="#6ea6cc" stroke-width="1.500"/><path d="M36 17.500l8 8" stroke="#6ea6cc" stroke-width="1.500"/><path d="M63 44l7.500-15 7.500 15z" fill="#ffc800"/><path d="M70.500 34v5M70.500 41v1.500" stroke="#000" stroke-width="1.500"/>' : sel ? '<path d="M3 34.500H76M68.500 1V42" stroke="#f6c9c9"/><path d="M3 36.500H76" stroke="#cdd2e6"/>' : '';
  return `<button class="w-[124px] shrink-0 flex flex-col items-center"><span class="w-[87px] h-[54px] border-2 p-px ${sel?'border-[#4b6c80]':'border-[#b4c4cc]'}"><svg class="block w-full h-full border border-[#4b6c80]" viewBox="0 0 79 46" preserveAspectRatio="none"><path d="${g}" stroke="#f6f6f8"/><path d="M64 1.500h13M2 43.500h72" stroke="#ddd" stroke-dasharray="2 1"/><path d="${d}" fill="none" stroke="#dfe1e8"/>${extra}</svg></span><span class="w-[119px] h-[17px] -mt-px pt-px ${sel?'bg-[#4b6c80] text-white':''}">${t}</span></button>`;
}).join('');

const line = (d,c,w=1) => `<path d="${d}" fill="none" stroke="${c}" stroke-width="${w}"/>`;
const text = (x,y,s,a='middle',more='') => `<text x="${x}" y="${y}" text-anchor="${a}" ${more}>${s}</text>`;

// Sweep result, converted to [log10(W), dB]
const raw = [[709.5,411.7],[713,415.3],[718,415.3],[723,417.3],[728,417.3],[743,423.3],[753,424.3],[764,430.7],[773,431.3],[777,434],[784,435.7],[793,439.3],[800,440.7],[820,448.7],[828,450],[837,453],[844,454.3],[853,459.3],[860,458.3],[869,463.3],[874,464.3],[887,470],[896,470.7],[910,476.3],[920,479],[926,483.7],[931,482.3],[936,483.3],[946,488.7],[955,489.3],[961,492.7],[972,493.3],[977,498],[983,500],[992,501.7],[997,504.7],[1007,507.3],[1012,508.3],[1016,512.3],[1022,512.3],[1027,510.3],[1032,516.3],[1041,518.3],[1047,520.7],[1056,522.3],[1061,525.3],[1067,525.7],[1073,529],[1083,530.7],[1093,535.7],[1107,540.3],[1123,542.3],[1133,548.3],[1143,549.3],[1147,553.3],[1153,553.7],[1160,556.7],[1172,559],[1186,564],[1200,566],[1214,571],[1230,575],[1248,581],[1262,584],[1278,590],[1296,598],[1312,603],[1330,609],[1345,614],[1356,615],[1370,621],[1386,625],[1398,629],[1410,629],[1422,635],[1440,639],[1454,641],[1466,645],[1478,649],[1486,650],[1500,654],[1515,654],[1527,653],[1532,637],[1540,641],[1549,638],[1560,643.3],[1567,644.7],[1577,647],[1583,646.3],[1587,649.3],[1593,649.7],[1603,651.7],[1607,654.3],[1617,653.3],[1623,655.3],[1628,655.3],[1635,658],[1648,659.3],[1653,657.7],[1663,647.3],[1668,635.7],[1678,609.3],[1683,591.7],[1687,480],[1690,416],[1694,372],[1699,352],[1706,333],[1711,312]];
const data = raw.map(([x,y]) => [(x-777.3)/137.6-4, (174.3-y)/4.408]);

function drawChart(){
  const s = document.getElementById('chart'), box = s.getBoundingClientRect(), W = box.width, H = box.height;
  const L=47.5, T=32.5, R=Math.round(W)-30.5, B=Math.round(H)-31.5;
  const X = v => L+(v+4.4927)/7.696*(R-L), Y = v => T+(9.48-v)/132.25*(B-T);
  const sx = v => Math.floor(X(v))+.5, sy = v => Math.floor(Y(v))+.5;
  let minor='', major='', o='';
  for (let e=-5;e<=3;e++) for (let m=1;m<10;m++){
    const v=Math.log10(m)+e; if (v<-4.49||v>3.2) continue;
    if ([1,2,5].includes(m)) major += `M${sx(v)} ${T}V${B}`; else minor += `M${sx(v)} ${T}V${B}`;
  }
  for (let y=0;y>=-120;y-=10) major += `M${L} ${sy(y)}H${R}`;
  o += line(minor,'#ebebeb')+line(major,'#cbcbcb')+line(`M${L} ${T}H${R}V${B}H${L}Z`,'#606060');
  o += line('M'+data.map(p=>X(p[0]).toFixed(1)+' '+Y(p[1]).toFixed(1)).join('L'),'#5870a6',1.2);
  const c1=[Math.log10(294.2),-104.696], c2=[Math.log10(348.4),-98.78];
  o += line(`M${sx(c1[0])} ${T}V${B}M${L} ${sy(c1[1])}H${R}`,'#0f2f6f');
  o += line(`M${sx(c2[0])} ${T}V${B}M${L} ${sy(c2[1])}H${R}`,'#f00000');
  o += `<circle cx="${X(c1[0])}" cy="${Y(c1[1])}" r="2.500" fill="#c5cce0" stroke="#3c548c"/><circle cx="${X(c2[0])}" cy="${Y(c2[1])}" r="3.500" fill="#ff8080" stroke="#d02020"/>`;
  o += text(X(c1[0])+2,Y(c1[1])-5,'Ch1','start')+text(X(c2[0])+2,Y(c2[1])-5,'Ch1-1','start');
  for (let y=0;y>=-120;y-=10) o += text(L-5,sy(y)+4,y,'end');
  for (let e=-5;e<=3;e++) for (const m of [1,2,5]){
    const v=Math.log10(m)+e; if (v<-4.49||v>3.2) continue;
    const k = e>=3?e-3:e>=0?e:e>=-3?e+3:e+6, u = e>=3?'k':e>=0?'':e>=-3?'m':'u';
    o += text(X(v),B+14,(m*10**k)+u);
  }
  o += text((L+R)/2,10,'THD+N Ratio vs Measured Level')+text(R-4,27,'2022-12-03 오후 8:45:52.747','end')+text((L+R)/2,B+27,'Measured Level (W)','middle','font-size="11"');
  o += `<text transform="translate(14 ${(T+B)/2}) rotate(-90)" text-anchor="middle" font-size="11">THD+N Ratio (dB)</text>`;
  o += `<g transform="translate(${R-33} 41)"><path d="M9 1C16-1 23 3 22 9S15 17 9 15" fill="none" stroke="#1273b0" stroke-width="1.800"/><text x="0" y="12" font-size="13" font-weight="700" font-style="italic" fill="#1273b0">Ap</text></g>`;
  s.innerHTML = o;
}
function drawScope(){
  const s = document.getElementById('scope'), box = s.getBoundingClientRect(), W = box.width, H = box.height;
  const L=47.5, T=14.5, R=Math.round(W)-25.5, B=Math.round(H)-31.5;
  const X = t => L+t/50*(R-L), Y = v => (T+B)/2-v/44*(B-T);
  let minor='', major='', o='';
  for (let t=5;t<50;t+=5){ const d=`M${Math.round(X(t))+.5} ${T}V${B}`; t%20?minor+=d:major+=d; }
  for (let v=-20;v<=20;v+=5){ const d=`M${L} ${Math.round(Y(v))-.5}H${R}`; v%10?minor+=d:major+=d; }
  o += line(minor,'#ebebeb')+line(major,'#cbcbcb')+line(`M${L} ${T}H${R}V${B}H${L}Z`,'#606060');
  let seed=7, d=[]; const rnd = () => (seed=(seed*16807)%2147483647)/2147483647;
  for (let i=0;i<=380;i++){ const t=i/380*50; d.push(X(t).toFixed(1)+' '+Y(5.800*Math.sin(2*Math.PI*(t-.4)/16.7)+(i%2?1:-1)*(.2+rnd()*3.600)).toFixed(1)); }
  o += line('M'+d.join('L'),'#48639c');
  for (const [v,n] of [[20,'20u'],[10,'10u'],[0,'0'],[-10,'-10u'],[-20,'-20u']]) o += text(L-4,Y(v)+3,n,'end');
  for (const [t,n] of [[0,'0'],[20,'20m'],[40,'40m']]) o += text(X(t),B+14,n);
  o += text((L+R)/2,10,'Scope')+text((L+R)/2,B+26,'Time (s)','middle','font-size="11"');
  o += `<text transform="translate(14 ${(T+B)/2}) rotate(-90)" text-anchor="middle" font-size="11">Instantaneous Level (V)</text>`;
  s.innerHTML = o;
}
// Redraw whenever either plot gets a new size
const draw = () => { drawChart(); drawScope(); };
draw();
const watcher = new ResizeObserver(draw);
watcher.observe(document.getElementById('chart').parentElement);
watcher.observe(document.getElementById('scope').parentElement);
addEventListener('load', draw);
</script>
</body>
</html>
